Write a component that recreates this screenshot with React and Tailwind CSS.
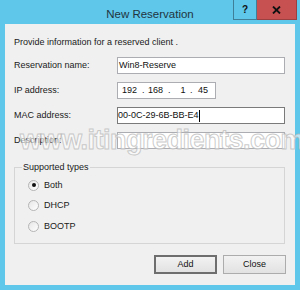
import React from "react";

function Radio({ checked, label }) {
  return (
    <div className="flex items-center h-[12px]">
      <div className="w-[11px] h-[11px] rounded-full border border-[#b5b5b5] bg-gradient-to-br from-[#e6e6e6] to-white flex items-center justify-center">
        {checked && <div className="w-[4px] h-[4px] rounded-full bg-[#111]" />}
      </div>
      <span className="ml-[5px] text-[9px] leading-[11px] text-[#1a1a1a]">{label}</span>
    </div>
  );
}

function Row({ label, children }) {
  return (
    <div className="flex items-center h-[17px]">
      <div className="w-[103px] text-[9px] leading-[11px] text-[#1a1a1a]">{label}</div>
      {children}
    </div>
  );
}

export default function App() {
  return (
    <div className="relative w-[300px] h-[290px] bg-[#5ec7ea] font-['Liberation_Sans',Arial,sans-serif] overflow-hidden">
      {/* Title bar */}
      <div className="relative h-[24px] flex items-center justify-center">
        <span className="text-[11.5px] leading-[14px] text-[#22353f] mt-[3px]">New Reservation</span>
        <div className="absolute right-[3px] top-0 flex">
          <div className="w-[24px] h-[20px] border border-[#3f7f98] border-t-0 flex items-center justify-center text-[10px] font-bold text-[#111]">?</div>
          <div className="w-[40px] h-[20px] bg-[#c75050] border border-[#9b4040] border-t-0 border-l-0 flex items-center justify-center">
            <svg width="9" height="8" viewBox="0 0 9 8">
              <path d="M1 0.5 L8 7.5 M8 0.5 L1 7.5" stroke="#111" strokeWidth="1.8" />
            </svg>
          </div>
        </div>
      </div>

      {/* Client area */}
      <div className="mx-[5px] w-[290px] h-[261px] bg-[#f0f0f0] px-[9px] pt-[13px]">
        <div className="text-[9px] leading-[11px] text-[#1a1a1a]">Provide information for a reserved client .</div>

        <div className="mt-[9px] flex flex-col gap-[8px]">
          <Row label="Reservation name:">
            <div className="w-[168px] h-[17px] bg-white border border-[#abadb3] flex items-center pl-[1px] text-[9px] text-[#111]">Win8-Reserve</div>
          </Row>
          <Row label="IP address:">
            <div className="w-[99px] h-[17px] bg-white border border-[#abadb3] flex items-center text-[9px] text-[#111]">
              <span className="ml-[4px] w-[16px]">192</span>
              <span className="ml-[4px] w-[6px]">.</span>
              <span className="w-[16px]">168</span>
              <span className="ml-[4px] w-[8px]">.</span>
              <span className="w-[14px] text-center">1</span>
              <span className="w-[6px]">.</span>
              <span className="ml-[2px]">45</span>
            </div>
          </Row>
          <Row label="MAC address:">
            <div className="w-[168px] h-[17px] bg-white border border-[#7a7a7a] flex items-center text-[9px] text-[#111]">
              <span>00-0C-29-6B-BB-E4</span>
              <span className="w-[1px] h-[12px] bg-black" />
            </div>
          </Row>
          <Row label="Description:">
            <div className="w-[168px] h-[17px] bg-white border border-[#abadb3]" />
          </Row>
        </div>

        {/* Group box */}
        <div className="relative mt-[18px] w-[271px] h-[77px] border border-[#d5d5d5] pl-[13px] pt-[11px]">
          <span className="absolute -top-[6px] left-[7px] px-[1px] bg-[#f0f0f0] text-[9px] leading-[11px] text-[#1a1a1a]">Supported types</span>
          <div className="flex flex-col gap-[8.5px]">
            <Radio checked label="Both" />
            <Radio label="DHCP" />
            <Radio label="BOOTP" />
          </div>
        </div>

        {/* Buttons */}
        <div className="mt-[11px] flex justify-end gap-[6px] w-[272px]">
          <div className="w-[63px] h-[19px] border-2 border-[#6e6e6e] bg-gradient-to-b from-[#f2f2f2] to-[#e2e2e2] flex items-center justify-center text-[9px] text-[#111]">Add</div>
          <div className="w-[63px] h-[19px] border border-[#acacac] bg-gradient-to-b from-[#f2f2f2] to-[#e2e2e2] flex items-center justify-center text-[9px] text-[#111]">Close</div>
        </div>
      </div>

      {/* Watermark */}
      <div className="absolute left-[20px] top-[125px] pointer-events-none text-[27px] font-bold leading-[30px] text-white/60 [-webkit-text-stroke:1px_rgba(185,185,185,0.75)] tracking-[-0.5px] whitespace-nowrap">
        www.itingredients.com
      </div>
    </div>
  );
}
